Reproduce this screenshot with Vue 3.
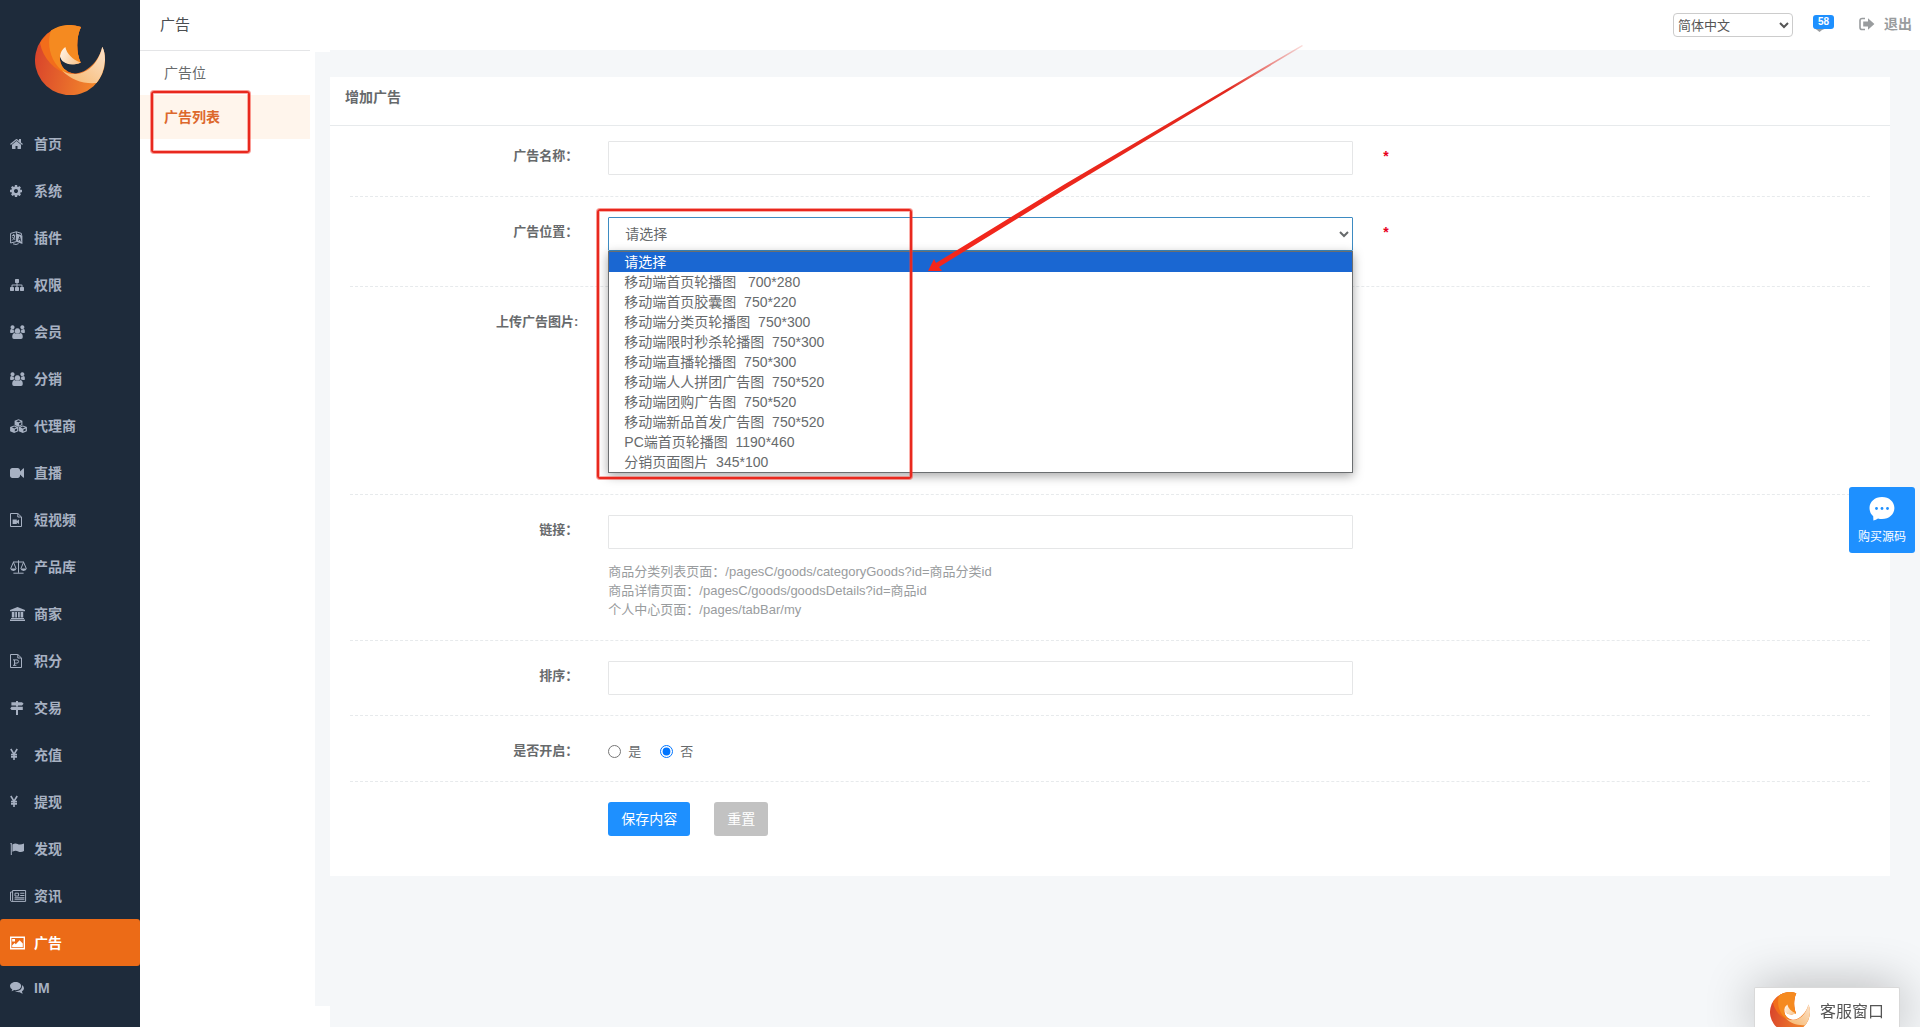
<script setup>
import { ref, defineComponent, h } from 'vue'

const menu = [
  { name: '首页', vb: '64 0 2304 1792', fill: 'M1472 992v480q0 26-19 45t-45 19h-384v-384h-256v384h-384q-26 0-45-19t-19-45v-480q0-1 .5-3t.5-3l575-474 575 474q1 2 1 6zm223-69l-62 74q-8 9-21 11h-3q-13 0-21-7l-692-577-692 577q-12 8-24 7-13-2-21-11l-62-74q-8-10-7-23.5t11-21.5l719-599q32-26 76-26t76 26l244 204v-195q0-14 9-23t23-9h192q14 0 23 9t9 23v408l219 182q10 8 11 21.5t-7 23.5z' },
  { name: '系统', vb: '128 0 2304 1792', fill: 'M1152 896q0-106-75-181t-181-75-181 75-75 181 75 181 181 75 181-75 75-181zm512-109v222q0 12-8 23t-20 13l-185 28q-19 54-39 91 35 50 107 138 10 12 10 25t-9 23q-27 37-99 108t-94 71q-12 0-26-9l-138-108q-44 23-91 38-16 136-29 186-7 28-36 28h-222q-14 0-24.5-8.5t-11.5-21.5l-28-184q-49-16-90-37l-141 107q-10 9-25 9-14 0-25-11-126-114-165-168-7-10-7-23 0-12 8-23 15-21 51-66.5t54-70.5q-27-50-41-99l-183-27q-13-2-21-12.5t-8-23.5v-222q0-12 8-23t19-13l186-28q14-46 39-92-40-57-107-138-10-12-10-24 0-10 9-23 26-36 98.5-107.5t94.5-71.5q13 0 26 10l138 107q44-23 91-38 16-136 29-186 7-28 36-28h222q14 0 24.5 8.5t11.5 21.5l28 184q49 16 90 37l142-107q9-9 24-9 13 0 25 10 129 119 165 170 7 8 7 22 0 12-8 23-15 21-51 66.5t-54 70.5q26 50 41 98l183 28q13 2 21 12.5t8 23.5z' },
  { name: '插件', fill: 'M6.4 2.6L12.4 4.6V13L6.4 10.8ZM8.1 9.6L8.9 9.8L9.2 8.8L10.3 9.2L10.6 10.4L11.4 10.7L10 5.6L9.3 5.4ZM9.4 7.9L9.7 6.7L10.1 8.2Z', line: 'M.6 2.4L6.4 .8V10.6L.6 12ZM2 4.8L5 4M3.5 3.2V5M2.2 9.4Q4.6 7.8 4.8 4.4M2.4 5.8Q3.4 8 5.2 8.6M6.4 .8L11.4 2.4V4M3 12.8L6 13.5L8.6 12.6' },
  { name: '权限', vb: '0 0 2304 1792', fill: 'M1792 1248v320q0 40-28 68t-68 28h-320q-40 0-68-28t-28-68v-320q0-40 28-68t68-28h96v-192h-512v192h96q40 0 68 28t28 68v320q0 40-28 68t-68 28h-320q-40 0-68-28t-28-68v-320q0-40 28-68t68-28h96v-192h-512v192h96q40 0 68 28t28 68v320q0 40-28 68t-68 28h-320q-40 0-68-28t-28-68v-320q0-40 28-68t68-28h96v-192q0-52 38-90t90-38h512v-192h-96q-40 0-68-28t-28-68v-320q0-40 28-68t68-28h320q40 0 68 28t28 68v320q0 40-28 68t-68 28h-96v192h512q52 0 90 38t38 90v192h96q40 0 68 28t28 68z' },
  { name: '会员', fill: 'users' },
  { name: '分销', fill: 'users' },
  { name: '代理商', fill: 'M8.5 .2L12.4 1.8V6L8.500 7.700L4.600 6V1.800ZM8.500 1.200L6.200 2.200L8.500 3.200L10.800 2.200ZM9.100 6.400L11.300 5.400V3.300L9.100 4.300ZM4.200 6.400L8.200 8V12.200L4.200 13.900L.1 12.200V8ZM4.200 7.400L1.900 8.400L4.200 9.400L6.500 8.400ZM4.800 12.600L7.100 11.600V9.500L4.800 10.500ZM12.800 6.400L16.900 8V12.200L12.800 13.900L8.800 12.200V8ZM12.800 7.400L10.500 8.400L12.800 9.400L15.100 8.400ZM13.400 12.600L15.700 11.600V9.500L13.400 10.500Z' },
  { name: '直播', vb: '0 0 2304 1792', fill: 'M1792 352v1088q0 42-39 59-13 5-25 5-27 0-45-19l-403-403v166q0 119-84.5 203.5t-203.5 84.5h-704q-119 0-203.5-84.5t-84.5-203.5v-704q0-119 84.5-203.5t203.5-84.5h704q119 0 203.5 84.5t84.5 203.5v165l403-402q18-19 45-19 12 0 25 5 39 17 39 59z' },
  { name: '短视频', fill: 'M2.6 6.5H6.8V8L9 6.5V11L6.8 9.6V11H2.6Z', line: 'M.5 .5H7.8L11.5 4V13.5H.5ZM7.8 .5V4H11.5' },
  { name: '产品库', fill: 'M.2 8.6H6.6Q6 11 3.4 11T.2 8.6ZM10.4 8.6H16.8Q16.2 11 13.6 11T10.4 8.6Z', line: 'M8.5 .3V12.8M3 2H14M3.4 13.2H13.6M3.4 2.2L.7 8.6M3.4 2.2L6.1 8.6M13.6 2.2L10.9 8.6M13.6 2.2L16.3 8.6' },
  { name: '商家', fill: 'M7.5 0L15 3V4.2H0V3ZM1.8 5H4.4V10.6H1.8ZM5.2 5H7V10.6H5.2ZM8 5H9.8V10.6H8ZM10.6 5H13.2V10.6H10.6ZM1 11H14V12H1ZM0 12.6H15V14H0Z' },
  { name: '积分', line: 'M.5 .5H7.8L11.5 4V13.5H.5ZM7.8 .5V4H11.5M3 5.9H6.8Q8.6 5.9 8.6 7.5T6.8 9.1H4.9M4.5 6V11.2M3 11.3H6.4' },
  { name: '交易', fill: 'M6 0H8V1.2H12L13.6 2.8L12 4.4H8V5.6H6V4.4H1.4V1.2H6ZM6 5.8H12.8V9H8V14H6V9H1.6L.2 7.4L1.6 5.8Z' },
  { name: '充值', line: 'yen' },
  { name: '提现', line: 'yen' },
  { name: '发现', fill: 'M.4 1H1.8V13H.8V2.6Q.2 1.8 .4 1ZM2.4 2.6Q5.2 .8 7.6 2T14 1.6V9Q11 10.8 8.2 9.4T2.4 9.8Z' },
  { name: '资讯', fill: 'M10.2 3.7H14.4V4.8H10.2ZM10.2 6H14.4V7.1H10.2ZM4.6 8.3H14.4V9.4H4.6ZM4.6 10H14.4V10.8H4.6Z', line: 'M2.6 1.5H15.6V12.4H1.6Q.5 12.4 .5 11.2V3H2.6ZM2.6 3V11.4Q2.6 12.4 1.6 12.4M5 4.2H8.6V7H5Z' },
  { name: '广告', active: true, fill: 'M2.2 3H5V5.6H2.2ZM2.2 11.2V9.2L4.6 7L5.8 8.2L9.6 4.2L12.8 7.4V11.2Z', line: 'M.7 1.3H14.3V12.7H.7Z' },
  { name: 'IM', fill: 'M5.6 1C8.8 1 11.2 2.8 11.2 5.1S8.8 9.2 5.6 9.2Q4.8 9.2 4.2 9.1Q2.8 10.2 1.2 10.3Q2.2 9.4 2.3 8.4Q0 7.2 0 5.1C0 2.8 2.4 1 5.6 1ZM12 4Q14 5.2 14 7.2Q14 9.2 11.9 10.5Q12 11.6 13 12.4Q11.2 12.4 9.8 11.2Q7 11.5 5 10.1Q9.6 10.2 11.4 7.4Q12.4 5.8 12 4Z' },
]
const shapes = {
  users: 'M7.5 3.2A2.8 2.8 0 1 1 7.4 3.2ZM2.6 .2A2 2 0 1 1 2.5 .2ZM12.4 .2A2 2 0 1 1 12.3 .2ZM.2 7.4Q-.2 3.8 1.4 4Q2.6 5 4 4.4Q3.4 6.2 4.6 7.4H3.4Q2.8 7.8 2.4 8H1Q.4 8 .2 7.4ZM14.8 7.4Q15.2 3.8 13.6 4Q12.4 5 11 4.4Q11.6 6.2 10.4 7.4H11.6Q12.2 7.8 12.6 8H14Q14.6 8 14.8 7.4ZM4.4 8Q7.5 10.2 10.6 8Q12.8 8.4 12.8 12Q12.8 14 11 14H4Q2.2 14 2.2 12Q2.2 8.4 4.4 8Z',
  yen: 'M.8 1L4 6.2L7.2 1M4 6V12M1 6.6H7M1 8.900H7',
}
const options = [
  '请选择',
  '移动端首页轮播图   700*280',
  '移动端首页胶囊图  750*220',
  '移动端分类页轮播图  750*300',
  '移动端限时秒杀轮播图  750*300',
  '移动端直播轮播图  750*300',
  '移动端人人拼团广告图  750*520',
  '移动端团购广告图  750*520',
  '移动端新品首发广告图  750*520',
  'PC端首页轮播图  1190*460',
  '分销页面图片  345*100',
]
const position = ref('请选择')
const enabled = ref('no')

const strokeOf = (item) => (item.active ? 1.4 : item.line === 'yen' ? 1.6 : 1)

const stop = (o, c) => h('stop', { offset: o, 'stop-color': c })
const Logo = defineComponent({
  props: { uid: String },
  setup: (p) => () => h('svg', { viewBox: '0 0 70 70', 'aria-hidden': 'true' }, [
    h('defs', [
      h('linearGradient', { id: p.uid + 'a', x1: 0, x2: 1, y1: 0.4, y2: 0.6 }, [stop(0, '#d9442b'), stop(1, '#f58d2b')]),
      h('linearGradient', { id: p.uid + 'b', x1: 0, x2: 1, y1: 1, y2: 0 }, [stop(0, '#f7b467'), stop(1, '#fbe3cc')]),
      h('linearGradient', { id: p.uid + 'c', x1: 0, x2: 1, y1: 0.3, y2: 0.8 }, [stop(0, '#fff1e2'), stop(1, '#f8c48c')]),
    ]),
    h('path', { fill: `url(#${p.uid}a)`, d: 'M46 2A35 35 0 1 0 70 35Q70 27 67.3 21.7C64 36 52 48 40 48.5C30 48 24 40 25 31Q30 42 45.7 37.7C41 28 41 12 46 2Z' }),
    h('path', { fill: '#f26d1b', d: 'M46 2A35 35 0 0 0 5 18C8 34 20 45 32 49L40 48.5C30 48 24 40 25 31Q30 42 45.7 37.7C41 28 41 12 46 2Z' }),
    h('path', { fill: '#f58a20', d: 'M46 2A35 35 0 0 0 16 5.5C11 20 16 38 29 47L32 46C27 43 24 38 25 31Q30 42 45.7 37.7C41 28 41 12 46 2Z' }),
    h('path', { fill: `url(#${p.uid}b)`, d: 'M67.3 21.7Q70 27 70 35Q69 49 61.5 58C48 59 36 55 27 45.5C40 54 61 48 67.3 21.7Z' }),
    h('path', { fill: `url(#${p.uid}c)`, d: 'M30.3 22C32 29 37 34 45.7 37.7C35 42 26 38 25 31Q26 25 30.3 22Z' }),
  ]),
})
</script>

<template>
  <div class="page">
    <aside class="sidebar">
      <Logo class="brand" uid="main" />
      <nav>
        <a v-for="item in menu" :key="item.name" href="#" class="menu-item" :class="{ active: item.active }">
          <svg class="menu-icon" :viewBox="item.vb || '0 0 18 14'" aria-hidden="true">
            <path v-if="item.fill" :d="shapes[item.fill] || item.fill" fill="currentColor" fill-rule="evenodd" />
            <path v-if="item.line" :d="shapes[item.line] || item.line" fill="none" stroke="currentColor" :stroke-width="strokeOf(item)" />
          </svg>
          <span>{{ item.name }}</span>
        </a>
      </nav>
    </aside>

    <aside class="subnav">
      <div class="subnav-main">
        <h1>广告</h1>
        <nav class="subnav-list">
          <a href="#">广告位</a>
          <a href="#" class="current">广告列表</a>
          <span class="mark mark-nav"></span>
        </nav>
      </div>
      <div class="rail"></div>
    </aside>

    <div class="workspace">
      <header class="topbar">
        <select class="lang" aria-label="语言">
          <option>简体中文</option>
        </select>
        <a href="#" class="messages" aria-label="消息">
          <svg viewBox="0 0 16 18" aria-hidden="true"><path fill="#999c9e" d="M2 4H14V13L9 15L6.500 17L4 15L1 13Z" /></svg>
          <span class="badge">58</span>
        </a>
        <a href="#" class="logout">
          <svg viewBox="0 0 16 14" aria-hidden="true">
            <path d="M6 1.5H3.2Q1 1.5 1 3.6V10.4Q1 12.5 3.2 12.5H6" fill="none" stroke="currentColor" stroke-width="1.6" />
            <path d="M4.2 4.4H9V1.2L15.4 7L9 12.8V9.6H4.2Z" fill="currentColor" />
          </svg>
          <span>退出</span>
        </a>
      </header>

      <main>
        <form class="card" @submit.prevent>
          <h2>增加广告</h2>
          <div class="card-body">
            <div class="form-row first">
              <div class="cells">
                <label class="caption" for="ad-name">广告名称：</label>
                <div class="field"><input id="ad-name" type="text" class="control" /></div>
                <div class="hint">*</div>
              </div>
            </div>

            <div class="form-row">
              <div class="cells">
                <label class="caption" for="ad-position">广告位置：</label>
                <div class="field">
                  <div class="picker">
                    <select id="ad-position" v-model="position" class="control open">
                      <option v-for="o in options" :key="o">{{ o }}</option>
                    </select>
                    <ul class="dropdown" role="listbox" aria-label="广告位置">
                      <li v-for="o in options" :key="o" role="option" :aria-selected="o === position" :class="{ selected: o === position }" @click="position = o">{{ o }}</li>
                    </ul>
                    <span class="mark mark-picker"></span>
                    <svg class="arrow" viewBox="0 0 380 240" aria-hidden="true">
                      <defs>
                        <linearGradient id="arrowFade" x1="0" x2="1" y1="0" y2="0">
                          <stop offset="0" stop-color="#f5261b" />
                          <stop offset="0.8" stop-color="#e2281e" />
                          <stop offset="1" stop-color="#e2281e" stop-opacity="0.15" />
                        </linearGradient>
                      </defs>
                      <path fill="url(#arrowFade)" d="M0 231L6 219L8 223L137 144L374 5L375 6L139 148L11 227L14 231Z" />
                    </svg>
                  </div>
                </div>
                <div class="hint">*</div>
              </div>
            </div>

            <div class="form-row">
              <div class="cells upload">
                <div class="caption">上传广告图片:</div>
              </div>
            </div>

            <div class="form-row">
              <div class="cells">
                <label class="caption" for="ad-link">链接：</label>
                <div class="field">
                  <input id="ad-link" type="text" class="control" />
                  <p class="help">
                    商品分类列表页面：/pagesC/goods/categoryGoods?id=商品分类id<br />
                    商品详情页面：/pagesC/goods/goodsDetails?id=商品id<br />
                    个人中心页面：/pages/tabBar/my
                  </p>
                </div>
              </div>
            </div>

            <div class="form-row">
              <div class="cells">
                <label class="caption" for="ad-sort">排序：</label>
                <div class="field"><input id="ad-sort" type="text" class="control" /></div>
              </div>
            </div>

            <div class="form-row">
              <div class="cells">
                <div id="enabled-caption" class="caption">是否开启：</div>
                <div class="field radios" role="radiogroup" aria-labelledby="enabled-caption">
                  <label><input v-model="enabled" type="radio" name="enabled" value="yes" />是</label>
                  <label><input v-model="enabled" type="radio" name="enabled" value="no" />否</label>
                </div>
              </div>
            </div>

            <div class="form-row last">
              <div class="cells">
                <div class="field actions">
                  <button type="submit" class="btn save">保存内容</button>
                  <button type="reset" class="btn reset">重置</button>
                </div>
              </div>
            </div>
          </div>
        </form>
      </main>
    </div>

    <button type="button" class="buy">
      <svg viewBox="0 0 26 24" aria-hidden="true">
        <path fill="#fff" d="M13 0C20.2 0 25.4 4.8 25.4 11S20.2 22 13 22Q10.8 22 9 21.4Q7 23 4.4 23.6L4.2 19.2Q.5 16 .5 11C.5 4.8 5.8 0 13 0Z" />
        <g fill="#1e90ff"><circle cx="7.5" cy="11.5" r="1.4" /><circle cx="13" cy="11.5" r="1.4" /><circle cx="18.5" cy="11.5" r="1.4" /></g>
      </svg>
      <span>购买源码</span>
    </button>

    <button type="button" class="service">
      <Logo class="service-logo" uid="svc" />
      <span>客服窗口</span>
    </button>
  </div>
</template>

<style>
body {
  background: #f5f7f9;
}
</style>

<style scoped>
* {
  box-sizing: border-box;
}
.page {
  display: flex;
  min-height: 100vh;
  font: 14px/20px "Liberation Sans", "Noto Sans CJK SC", sans-serif;
  color: #676a6c;
}
a {
  text-decoration: none;
}
button,
input,
select {
  font-family: inherit;
}

.sidebar {
  flex: none;
  width: 140px;
  padding-top: 25px;
  background: #1e2b3b;
}
.brand {
  display: block;
  width: 70px;
  height: 70px;
  margin: 0 auto 25px;
}
.menu-item {
  display: flex;
  align-items: center;
  gap: 6px;
  height: 47px;
  padding-left: 10px;
  border-radius: 3px;
  font-weight: bold;
  color: #a7b1c2;
}
.menu-item:last-child {
  height: 44px;
}
.menu-item.active {
  background: #ec6b17;
  color: #fff;
}
.menu-icon {
  width: 18px;
  height: 14px;
}

.subnav {
  display: flex;
  flex: none;
  width: 190px;
  background: #fff;
}
.subnav-main {
  flex: 1;
  padding-right: 5px;
}
.subnav h1 {
  height: 51px;
  margin: 0;
  padding: 14px 20px;
  border-bottom: 1px solid #e4e5e7;
  font-size: 15px;
  font-weight: normal;
  line-height: 22px;
  color: #4a4d50;
}
.subnav-list {
  position: relative;
}
.subnav-list a {
  display: block;
  height: 44px;
  padding-left: 24px;
  line-height: 44px;
  color: #676a6c;
}
.subnav-list .current {
  background: #fff5ec;
  font-weight: bold;
  color: #dd682c;
}
.rail {
  width: 15px;
  margin: 52px 0 21px;
  background: #f5f7f9;
}
.mark {
  position: absolute;
  border: 2px solid #e8281e;
  border-radius: 3px;
  box-shadow: 0 0 0 1px rgba(245, 60, 48, 0.5), inset 0 0 0 1px rgba(245, 60, 48, 0.4);
  pointer-events: none;
}
.mark-nav {
  top: 40px;
  left: 11px;
  width: 99px;
  height: 62px;
}

.workspace {
  flex: 1;
  min-width: 0;
}
.topbar {
  display: flex;
  align-items: center;
  justify-content: flex-end;
  height: 50px;
  padding: 0 8px 10px 0;
  background: #fff;
}
.lang {
  width: 120px;
  height: 24px;
  margin-top: 10px;
  padding: 0;
  border: 1px solid #ccc;
  border-radius: 4px;
  background: #fff;
  font-size: 13px;
  color: #555;
}
.messages {
  position: relative;
  width: 21px;
  height: 18px;
  margin: 8px 25px 0 20px;
}
.messages svg {
  display: block;
  width: 16px;
  height: 18px;
}
.badge {
  position: absolute;
  top: 0;
  left: 0;
  width: 21px;
  height: 14px;
  border-radius: 3px;
  background: #1e90ff;
  font-size: 10px;
  font-weight: bold;
  line-height: 14px;
  text-align: center;
  color: #fff;
}
.logout {
  display: flex;
  align-items: center;
  gap: 9px;
  margin-top: 8px;
  font-weight: bold;
  color: #999c9e;
}
.logout svg {
  width: 16px;
  height: 14px;
}

main {
  padding: 27px 30px 0 0;
}
.card {
  background: #fff;
}
.card h2 {
  height: 49px;
  margin: 0;
  padding: 10px 15px;
  border-bottom: 1px solid #e7eaec;
  font-size: 14px;
  font-weight: bold;
  line-height: 20px;
}
.card-body {
  padding: 0 20px;
}
.form-row {
  padding: 20px 0;
  border-bottom: 1px dashed #e7eaec;
}
.form-row.first {
  padding: 15px 0 21px;
}
.form-row.last {
  padding-bottom: 40px;
  border-bottom: 0;
}
.cells {
  display: grid;
  grid-template-columns: 1fr 3fr 2fr;
  margin: 0 -15px;
}
.cells.upload {
  min-height: 167px;
}
.caption {
  padding: 5px 15px 0;
  font-size: 13px;
  font-weight: bold;
  line-height: 19px;
  text-align: right;
}
.field {
  grid-column: 2;
  min-width: 0;
  padding: 0 15px;
}
.control {
  display: block;
  width: 100%;
  height: 34px;
  padding: 6px 12px;
  border: 1px solid #e5e6e7;
  border-radius: 1px;
  background: #fff;
  font-size: 14px;
  color: #676a6c;
}
.control.open {
  padding: 0 1px 0 12px;
  border-color: #3d8bc2;
  outline: none;
}
.hint {
  padding: 6px 15px 0;
  font-size: 14px;
  font-weight: bold;
  line-height: 19px;
  color: #e8001c;
}
.picker {
  position: relative;
  margin-bottom: 15px;
}
.dropdown {
  position: absolute;
  z-index: 2;
  top: 34px;
  left: 0;
  width: 100%;
  margin: 0;
  padding: 0;
  border: 1px solid #6b6e70;
  background: #fff;
  box-shadow: 0 3px 10px rgba(0, 0, 0, 0.35);
  list-style: none;
}
.dropdown li {
  height: 20px;
  padding-left: 15px;
  line-height: 20px;
  white-space: pre;
}
.dropdown .selected {
  background: #1a67d2;
  color: #fff;
}
.mark-picker {
  z-index: 3;
  top: -8px;
  left: -11px;
  width: 315px;
  height: 270px;
}
.arrow {
  position: absolute;
  z-index: 3;
  top: -177px;
  left: 320px;
  width: 380px;
  height: 240px;
  pointer-events: none;
}
.help {
  margin: 13px 0 1px;
  font-size: 13px;
  line-height: 19px;
  color: #999c9e;
}
.radios {
  display: flex;
  gap: 19px;
  padding-top: 6px;
  font-size: 13px;
  line-height: 19px;
}
.radios label {
  display: flex;
  align-items: center;
  gap: 7px;
}
.radios input {
  width: 13px;
  height: 13px;
  margin: 0;
}
.actions {
  display: flex;
  gap: 24px;
}
.btn {
  height: 34px;
  padding: 0 13px 2px;
  border: 0;
  border-radius: 3px;
  font-size: 14px;
  color: #fff;
}
.save {
  background: #1e90ff;
}
.reset {
  background: #c2c2c2;
}

.buy {
  position: fixed;
  z-index: 4;
  top: 487px;
  right: 5px;
  display: flex;
  flex-direction: column;
  align-items: center;
  gap: 7px;
  width: 66px;
  height: 66px;
  padding: 10px 0 0;
  border: 0;
  border-radius: 3px;
  background: #1e90ff;
  font-size: 12px;
  line-height: 18px;
  color: #fff;
}
.buy svg {
  width: 26px;
  height: 24px;
}
.service {
  position: fixed;
  z-index: 4;
  right: 20px;
  bottom: 0;
  display: flex;
  align-items: flex-start;
  gap: 10px;
  width: 146px;
  height: 40px;
  padding: 4px 0 0 15px;
  overflow: hidden;
  border: 1px solid #d9d9d9;
  border-bottom: 0;
  border-radius: 2px 2px 0 0;
  background: #fff;
  box-shadow: 1px 1px 50px rgba(0, 0, 0, 0.3);
  font-size: 16px;
  line-height: 40px;
  color: #555;
}
.service-logo {
  flex: none;
  width: 40px;
  height: 40px;
}
</style>
